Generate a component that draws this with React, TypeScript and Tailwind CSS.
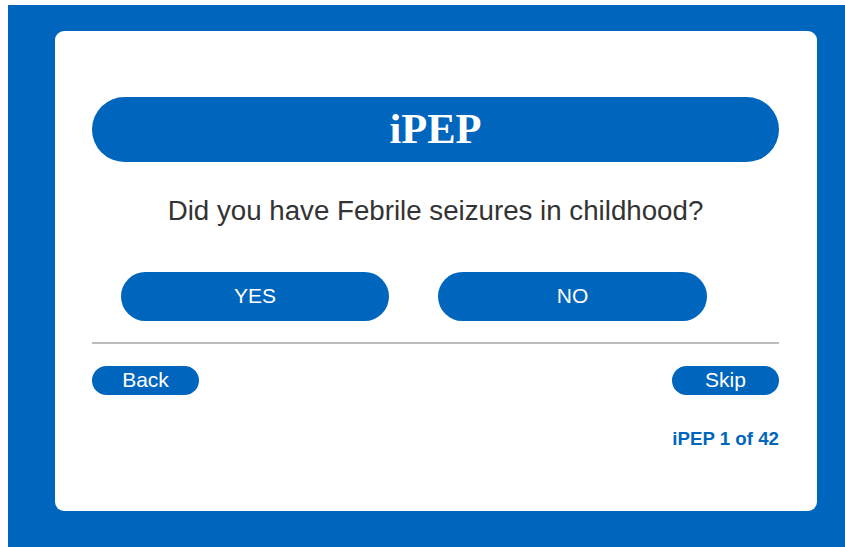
import React from "react";

const arial = { fontFamily: '"Liberation Sans", Arial, sans-serif' };

function PillButton({ label, className }: { label: string; className: string }) {
  return (
    <button
      type="button"
      className={`rounded-full bg-[#0065bd] text-white flex items-center justify-center ${className}`}
    >
      {label}
    </button>
  );
}

export default function App() {
  return (
    <div className="h-[547px] w-[845px] overflow-hidden bg-white pl-[8px] pt-[5px]" style={arial}>
      <div className="h-full w-full bg-[#0065bd] pl-[47px] pt-[26px]">
        <div className="w-[762px] h-[480px] bg-white rounded-[9px] pl-[37px] pr-[38px] pt-[66px]">
          {/* Title bar */}
          <div className="h-[65px] rounded-full bg-[#0065bd] flex items-center justify-center">
            <h1
              className="text-white text-[42.5px] font-bold leading-none"
              style={{ fontFamily: '"Liberation Serif", "Times New Roman", serif' }}
            >
              iPEP
            </h1>
          </div>

          <p className="mt-[33px] text-center text-[27.7px] leading-[32px] text-[#333333]">
            Did you have Febrile seizures in childhood?
          </p>

          {/* Answers */}
          <div className="mt-[45px] flex gap-[49px] pl-[29px]">
            <PillButton label="YES" className="w-[268px] h-[49px] text-[21px] pb-[1px]" />
            <PillButton label="NO" className="w-[269px] h-[49px] text-[21px] pb-[1px]" />
          </div>

          <div className="mt-[21px] h-[2px] bg-[#bdbdbd]" />

          {/* Navigation */}
          <div className="mt-[22px] flex justify-between">
            <PillButton label="Back" className="w-[107px] h-[29px] text-[21px] leading-none pb-[2px]" />
            <PillButton label="Skip" className="w-[107px] h-[29px] text-[21px] leading-none pb-[2px]" />
          </div>

          <p className="mt-[33px] text-right text-[18.7px] leading-[21px] font-bold text-[#0065bd]">
            iPEP 1 of 42
          </p>
        </div>
      </div>
    </div>
  );
}
